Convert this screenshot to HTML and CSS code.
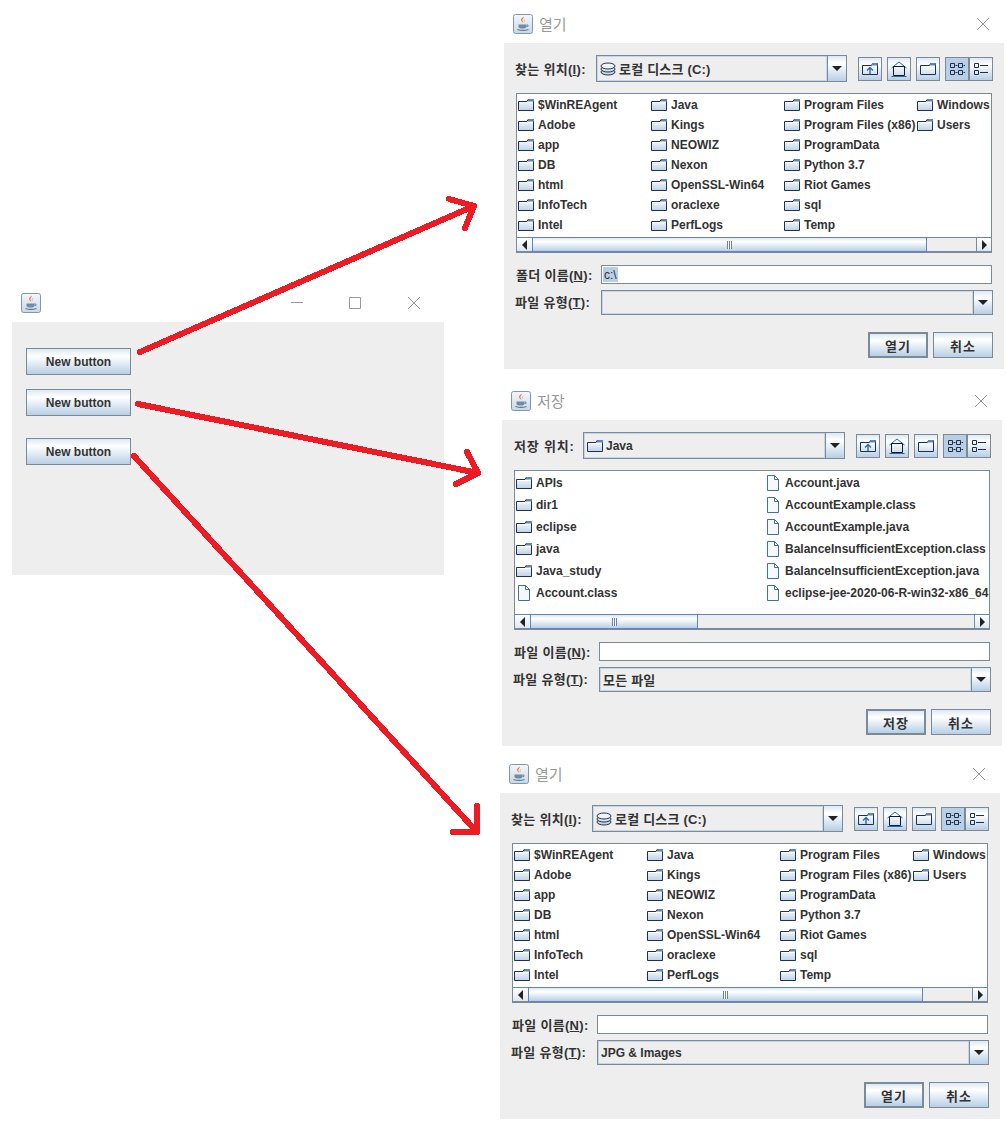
FILE: index.html
```html
<!DOCTYPE html>
<html lang="ko">
<head>
<meta charset="utf-8">
<title>JFileChooser</title>
<link rel="stylesheet" href="styles.css">
</head>
<body>
<svg class="defs" width="0" height="0" aria-hidden="true">
  <defs>
    <linearGradient id="fg" x1="0" y1="0" x2="0" y2="1"><stop offset="0" stop-color="#ffffff"/><stop offset="1" stop-color="#bcd2e7"/></linearGradient>
    <linearGradient id="jg" x1="0" y1="0" x2="0" y2="1"><stop offset="0" stop-color="#f4f7fa"/><stop offset="1" stop-color="#c9d8e6"/></linearGradient>
    <symbol id="java" viewBox="0 0 20 20">
      <rect x="0.5" y="0.5" width="19" height="19" rx="2" fill="url(#jg)" stroke="#8096ab"/>
      <path d="M10.500 2.500c1 1.500-2 2.500-1 4.500.3.600.8 1.200 1 1.800-2-1-3.200-2.700-2-4.300C9.300 3.700 10.300 3.500 10.500 2.500z" fill="#e8762b"/>
      <path d="M12.500 5c-1 .8-1.700 1.700-1 3.300-1-.8-1.300-2.500 1-3.300z" fill="#e8762b"/>
      <path d="M5.500 10.500h8v2c0 1.500-1.500 2-4 2s-4-.5-4-2z" fill="#6f8ca6"/>
      <path d="M13.500 11h1.500v1.500h-1.500" fill="none" stroke="#6f8ca6"/>
      <path d="M4.500 15.500c3 1 8 1 11 0" fill="none" stroke="#5c7a96" stroke-width="1.200"/>
    </symbol>
    <symbol id="folder" viewBox="0 0 16 14">
      <path d="M0.500 3.500h8.500l1-2h5.500v11h-15z" fill="url(#fg)" stroke="#22304a"/>
      <path d="M9.500 3.500l1-2.500h5.500v2.500z" fill="#6382bf"/>
      <path d="M1 4.500h14" stroke="#ffffff"/>
    </symbol>
    <symbol id="file" viewBox="0 0 14 16">
      <path d="M1.500 0.500h7l4 4v11h-11z" fill="#f6f9fc" stroke="#3f6fa6"/>
      <path d="M8.500 0.500v4h4" fill="none" stroke="#3f6fa6"/>
    </symbol>
    <symbol id="disk" viewBox="0 0 16 16">
      <ellipse cx="8" cy="11" rx="7" ry="3" fill="#c5d3e2" stroke="#26364d"/>
      <ellipse cx="8" cy="8" rx="7" ry="3" fill="#d8e2ed" stroke="#26364d"/>
      <ellipse cx="8" cy="5" rx="7" ry="3" fill="#eef3f8" stroke="#26364d"/>
    </symbol>
    <symbol id="up" viewBox="0 0 16 16">
      <path d="M0.500 4.500h9l1-2h5v11h-15z" fill="none" stroke="#1f2f4d"/>
      <path d="M10.500 2h5v2.500h-6z" fill="#6382bf"/>
      <path d="M8 13v-6M5 9.500l3-3 3 3" fill="none" stroke="#2b6cb0" stroke-width="1.400"/>
    </symbol>
    <symbol id="home" viewBox="0 0 16 16">
      <path d="M0.500 7l7.500-6 7.500 6" fill="none" stroke="#2c6aa8"/>
      <path d="M2.500 5.500h11v9h-11z" fill="none" stroke="#111a2c"/>
      <path d="M0.500 15.500h15" stroke="#2c6aa8"/>
    </symbol>
    <symbol id="newf" viewBox="0 0 16 16">
      <path d="M0.500 4.500h9l1-2h5v11h-15z" fill="none" stroke="#1f2f4d"/>
      <path d="M10.500 2h5v2.500h-6z" fill="#6382bf"/>
    </symbol>
    <symbol id="grid" viewBox="0 0 16 16">
      <path d="M1.500 2.500h4v4h-4zM9.500 2.500h4v4h-4zM1.500 9.500h4v4h-4zM9.500 9.500h4v4h-4z" fill="none" stroke="#1f2f4d"/>
      <path d="M6.500 4.500h2M14.500 4.500h1.500M6.500 11.500h2M14.500 11.500h1.500" stroke="#1f2f4d"/>
    </symbol>
    <symbol id="rows" viewBox="0 0 16 16">
      <path d="M1.500 2.500h4v4h-4zM1.500 9.500h4v4h-4z" fill="none" stroke="#1f2f4d"/>
      <path d="M7 4.500h8M7 11.500h8" stroke="#1f2f4d"/>
    </symbol>
    <symbol id="min" viewBox="0 0 12 12"><path d="M0 5.500h12" stroke="#999"/></symbol>
    <symbol id="max" viewBox="0 0 12 12"><path d="M0.500 0.500h11v11h-11z" fill="none" stroke="#999"/></symbol>
    <symbol id="close" viewBox="0 0 12 12"><path d="M0 0l12 12M12 0l-12 12" stroke="#999"/></symbol>
  </defs>
</svg>

<div class="canvas">

  <section class="frame frame-main">
    <header class="titlebar titlebar-main">
      <svg class="app-icon"><use href="#java"/></svg>
      <span class="win-ctl win-min"><svg class="ctl"><use href="#min"/></svg></span>
      <span class="win-ctl win-max"><svg class="ctl"><use href="#max"/></svg></span>
      <span class="win-ctl win-close"><svg class="ctl"><use href="#close"/></svg></span>
    </header>
    <div class="main-panel">
      <button class="btn btn-new">New button</button>
      <button class="btn btn-new gap-a">New button</button>
      <button class="btn btn-new gap-b">New button</button>
    </div>
  </section>

  <section class="frame frame-dlg dlg-open-a">
    <header class="titlebar">
      <svg class="app-icon"><use href="#java"/></svg>
      <h1 class="dlg-title">열기</h1>
      <svg class="ctl dlg-close"><use href="#close"/></svg>
    </header>
    <div class="dlg-body">
      <div class="top-row">
        <label class="top-label">찾는 위치(<u>I</u>):</label>
        <div class="combo combo-top">
          <div class="combo-field ko"><svg class="ico-disk"><use href="#disk"/></svg>로컬 디스크 (C:)</div>
          <div class="combo-arrow"><i class="tri-down"></i></div>
        </div>
        <div class="tools">
          <button class="tool"><svg class="tool-ico"><use href="#up"/></svg></button>
          <button class="tool"><svg class="tool-ico"><use href="#home"/></svg></button>
          <button class="tool"><svg class="tool-ico"><use href="#newf"/></svg></button>
          <div class="tool-pair">
            <button class="tool tool-on"><svg class="tool-ico"><use href="#grid"/></svg></button>
            <button class="tool"><svg class="tool-ico"><use href="#rows"/></svg></button>
          </div>
        </div>
      </div>
      <div class="list">
        <div class="list-grid four">
          <div class="cell"><svg class="ico-f"><use href="#folder"/></svg>$WinREAgent</div>
          <div class="cell"><svg class="ico-f"><use href="#folder"/></svg>Adobe</div>
          <div class="cell"><svg class="ico-f"><use href="#folder"/></svg>app</div>
          <div class="cell"><svg class="ico-f"><use href="#folder"/></svg>DB</div>
          <div class="cell"><svg class="ico-f"><use href="#folder"/></svg>html</div>
          <div class="cell"><svg class="ico-f"><use href="#folder"/></svg>InfoTech</div>
          <div class="cell"><svg class="ico-f"><use href="#folder"/></svg>Intel</div>
          <div class="cell"><svg class="ico-f"><use href="#folder"/></svg>Java</div>
          <div class="cell"><svg class="ico-f"><use href="#folder"/></svg>Kings</div>
          <div class="cell"><svg class="ico-f"><use href="#folder"/></svg>NEOWIZ</div>
          <div class="cell"><svg class="ico-f"><use href="#folder"/></svg>Nexon</div>
          <div class="cell"><svg class="ico-f"><use href="#folder"/></svg>OpenSSL-Win64</div>
          <div class="cell"><svg class="ico-f"><use href="#folder"/></svg>oraclexe</div>
          <div class="cell"><svg class="ico-f"><use href="#folder"/></svg>PerfLogs</div>
          <div class="cell"><svg class="ico-f"><use href="#folder"/></svg>Program Files</div>
          <div class="cell"><svg class="ico-f"><use href="#folder"/></svg>Program Files (x86)</div>
          <div class="cell"><svg class="ico-f"><use href="#folder"/></svg>ProgramData</div>
          <div class="cell"><svg class="ico-f"><use href="#folder"/></svg>Python 3.7</div>
          <div class="cell"><svg class="ico-f"><use href="#folder"/></svg>Riot Games</div>
          <div class="cell"><svg class="ico-f"><use href="#folder"/></svg>sql</div>
          <div class="cell"><svg class="ico-f"><use href="#folder"/></svg>Temp</div>
          <div class="cell"><svg class="ico-f"><use href="#folder"/></svg>Windows</div>
          <div class="cell"><svg class="ico-f"><use href="#folder"/></svg>Users</div>
        </div>
        <div class="scrollbar">
          <div class="sb-btn"><i class="tri-left"></i></div>
          <div class="sb-thumb thumb-wide"><i class="grip"></i></div>
          <div class="sb-track"></div>
          <div class="sb-btn"><i class="tri-right"></i></div>
        </div>
      </div>
      <div class="field-row">
        <label class="field-label">폴더 이름(<u>N</u>):</label>
        <div class="textbox"><span class="sel">c:\</span></div>
      </div>
      <div class="type-row">
        <label class="field-label">파일 유형(<u>T</u>):</label>
        <div class="combo combo-type">
          <div class="combo-field"></div>
          <div class="combo-arrow"><i class="tri-down"></i></div>
        </div>
      </div>
      <div class="actions">
        <button class="btn btn-act btn-default">열기</button>
        <button class="btn btn-act">취소</button>
      </div>
    </div>
  </section>

  <section class="frame frame-dlg dlg-save">
    <header class="titlebar">
      <svg class="app-icon"><use href="#java"/></svg>
      <h1 class="dlg-title">저장</h1>
      <svg class="ctl dlg-close"><use href="#close"/></svg>
    </header>
    <div class="dlg-body">
      <div class="top-row">
        <label class="top-label top-label-save">저장 위치:</label>
        <div class="combo combo-top">
          <div class="combo-field"><svg class="ico-f ico-tight"><use href="#folder"/></svg>Java</div>
          <div class="combo-arrow"><i class="tri-down"></i></div>
        </div>
        <div class="tools">
          <button class="tool"><svg class="tool-ico"><use href="#up"/></svg></button>
          <button class="tool"><svg class="tool-ico"><use href="#home"/></svg></button>
          <button class="tool"><svg class="tool-ico"><use href="#newf"/></svg></button>
          <div class="tool-pair">
            <button class="tool tool-on"><svg class="tool-ico"><use href="#grid"/></svg></button>
            <button class="tool"><svg class="tool-ico"><use href="#rows"/></svg></button>
          </div>
        </div>
      </div>
      <div class="list">
        <div class="list-grid two">
          <div class="cell"><svg class="ico-f"><use href="#folder"/></svg>APIs</div>
          <div class="cell"><svg class="ico-f"><use href="#folder"/></svg>dir1</div>
          <div class="cell"><svg class="ico-f"><use href="#folder"/></svg>eclipse</div>
          <div class="cell"><svg class="ico-f"><use href="#folder"/></svg>java</div>
          <div class="cell"><svg class="ico-f"><use href="#folder"/></svg>Java_study</div>
          <div class="cell"><svg class="ico-file"><use href="#file"/></svg>Account.class</div>
          <div class="cell"><svg class="ico-file"><use href="#file"/></svg>Account.java</div>
          <div class="cell"><svg class="ico-file"><use href="#file"/></svg>AccountExample.class</div>
          <div class="cell"><svg class="ico-file"><use href="#file"/></svg>AccountExample.java</div>
          <div class="cell"><svg class="ico-file"><use href="#file"/></svg>BalanceInsufficientException.class</div>
          <div class="cell"><svg class="ico-file"><use href="#file"/></svg>BalanceInsufficientException.java</div>
          <div class="cell"><svg class="ico-file"><use href="#file"/></svg>eclipse-jee-2020-06-R-win32-x86_64</div>
        </div>
        <div class="scrollbar">
          <div class="sb-btn"><i class="tri-left"></i></div>
          <div class="sb-thumb thumb-narrow"><i class="grip"></i></div>
          <div class="sb-track"></div>
          <div class="sb-btn"><i class="tri-right"></i></div>
        </div>
      </div>
      <div class="field-row">
        <label class="field-label">파일 이름(<u>N</u>):</label>
        <div class="textbox"></div>
      </div>
      <div class="type-row">
        <label class="field-label">파일 유형(<u>T</u>):</label>
        <div class="combo combo-type">
          <div class="combo-field ko">모든 파일</div>
          <div class="combo-arrow"><i class="tri-down"></i></div>
        </div>
      </div>
      <div class="actions">
        <button class="btn btn-act btn-default">저장</button>
        <button class="btn btn-act">취소</button>
      </div>
    </div>
  </section>

  <section class="frame frame-dlg dlg-open-b">
    <header class="titlebar">
      <svg class="app-icon"><use href="#java"/></svg>
      <h1 class="dlg-title">열기</h1>
      <svg class="ctl dlg-close"><use href="#close"/></svg>
    </header>
    <div class="dlg-body">
      <div class="top-row">
        <label class="top-label">찾는 위치(<u>I</u>):</label>
        <div class="combo combo-top">
          <div class="combo-field ko"><svg class="ico-disk"><use href="#disk"/></svg>로컬 디스크 (C:)</div>
          <div class="combo-arrow"><i class="tri-down"></i></div>
        </div>
        <div class="tools">
          <button class="tool"><svg class="tool-ico"><use href="#up"/></svg></button>
          <button class="tool"><svg class="tool-ico"><use href="#home"/></svg></button>
          <button class="tool"><svg class="tool-ico"><use href="#newf"/></svg></button>
          <div class="tool-pair">
            <button class="tool tool-on"><svg class="tool-ico"><use href="#grid"/></svg></button>
            <button class="tool"><svg class="tool-ico"><use href="#rows"/></svg></button>
          </div>
        </div>
      </div>
      <div class="list">
        <div class="list-grid four">
          <div class="cell"><svg class="ico-f"><use href="#folder"/></svg>$WinREAgent</div>
          <div class="cell"><svg class="ico-f"><use href="#folder"/></svg>Adobe</div>
          <div class="cell"><svg class="ico-f"><use href="#folder"/></svg>app</div>
          <div class="cell"><svg class="ico-f"><use href="#folder"/></svg>DB</div>
          <div class="cell"><svg class="ico-f"><use href="#folder"/></svg>html</div>
          <div class="cell"><svg class="ico-f"><use href="#folder"/></svg>InfoTech</div>
          <div class="cell"><svg class="ico-f"><use href="#folder"/></svg>Intel</div>
          <div class="cell"><svg class="ico-f"><use href="#folder"/></svg>Java</div>
          <div class="cell"><svg class="ico-f"><use href="#folder"/></svg>Kings</div>
          <div class="cell"><svg class="ico-f"><use href="#folder"/></svg>NEOWIZ</div>
          <div class="cell"><svg class="ico-f"><use href="#folder"/></svg>Nexon</div>
          <div class="cell"><svg class="ico-f"><use href="#folder"/></svg>OpenSSL-Win64</div>
          <div class="cell"><svg class="ico-f"><use href="#folder"/></svg>oraclexe</div>
          <div class="cell"><svg class="ico-f"><use href="#folder"/></svg>PerfLogs</div>
          <div class="cell"><svg class="ico-f"><use href="#folder"/></svg>Program Files</div>
          <div class="cell"><svg class="ico-f"><use href="#folder"/></svg>Program Files (x86)</div>
          <div class="cell"><svg class="ico-f"><use href="#folder"/></svg>ProgramData</div>
          <div class="cell"><svg class="ico-f"><use href="#folder"/></svg>Python 3.7</div>
          <div class="cell"><svg class="ico-f"><use href="#folder"/></svg>Riot Games</div>
          <div class="cell"><svg class="ico-f"><use href="#folder"/></svg>sql</div>
          <div class="cell"><svg class="ico-f"><use href="#folder"/></svg>Temp</div>
          <div class="cell"><svg class="ico-f"><use href="#folder"/></svg>Windows</div>
          <div class="cell"><svg class="ico-f"><use href="#folder"/></svg>Users</div>
        </div>
        <div class="scrollbar">
          <div class="sb-btn"><i class="tri-left"></i></div>
          <div class="sb-thumb thumb-wide"><i class="grip"></i></div>
          <div class="sb-track"></div>
          <div class="sb-btn"><i class="tri-right"></i></div>
        </div>
      </div>
      <div class="field-row">
        <label class="field-label">파일 이름(<u>N</u>):</label>
        <div class="textbox"></div>
      </div>
      <div class="type-row">
        <label class="field-label">파일 유형(<u>T</u>):</label>
        <div class="combo combo-type">
          <div class="combo-field">JPG &amp; Images</div>
          <div class="combo-arrow"><i class="tri-down"></i></div>
        </div>
      </div>
      <div class="actions">
        <button class="btn btn-act btn-default">열기</button>
        <button class="btn btn-act">취소</button>
      </div>
    </div>
  </section>

  <svg class="arrows" viewBox="0 0 1007 1130" aria-hidden="true">
    <path d="M140 352L474 206M449 199L474 206L465 228"/>
    <path d="M138 404L478 473M467 452L478 473L456 484"/>
    <path d="M134 456L477 832M477 806L477 832L453 832"/>
  </svg>
</div>
</body>
</html>
```

FILE: styles.css
```css
* { box-sizing: border-box; }

html, body {
  margin: 0;
  padding: 0;
  background: #ffffff;
}

body {
  font-family: "Liberation Sans", "Noto Sans CJK KR", sans-serif;
  font-size: 12px;
  font-weight: 700;
  color: #333333;
}

.defs { position: absolute; }

.canvas {
  position: relative;
  width: 1007px;
  height: 1130px;
  overflow: hidden;
}

/* free-canvas windows */
.frame { position: absolute; }
.frame-main { left: 12px; top: 289px; width: 432px; }
.frame-dlg { width: 500px; }
.dlg-open-a { left: 504px; top: 10px; }
.dlg-save { left: 502px; top: 387px; }
.dlg-open-b { left: 500px; top: 760px; }

.arrows {
  position: absolute;
  left: 0;
  top: 0;
  width: 1007px;
  height: 1130px;
  pointer-events: none;
}
.arrows path {
  fill: none;
  stroke: #ed1c24;
  stroke-width: 6;
  stroke-linecap: round;
  stroke-linejoin: round;
  shape-rendering: crispEdges;
}

/* title bars */
.titlebar {
  display: flex;
  align-items: center;
  height: 33px;
  padding: 0 0 6px 9px;
  background: #ffffff;
}
.app-icon { width: 20px; height: 20px; flex: none; }
.dlg-title {
  margin: 0 0 0 6px;
  font-family: "Noto Sans CJK KR", sans-serif;
  font-size: 15px;
  font-weight: 400;
  color: #999999;
  flex: 1;
}
.ctl { width: 12px; height: 12px; display: block; }
.dlg-close { margin-right: 15px; }

.win-ctl { display: block; }
.win-min { margin-left: 250px; }
.win-max { margin-left: 46px; }
.win-close { margin-left: 47px; }

/* main panel */
.main-panel {
  display: flex;
  flex-direction: column;
  align-items: flex-start;
  height: 253px;
  padding: 26px 14px;
  background: #eeeeee;
}

/* buttons */
.btn {
  display: block;
  padding: 0;
  border: 1px solid #7a8a99;
  background: linear-gradient(to bottom, #dde8f3 0%, #ffffff 28%, #f4f8fb 40%, #b8cfe5 100%);
  font: inherit;
  color: #333333;
  text-align: center;
}
.btn-new { width: 105px; height: 27px; }
.gap-a { margin-top: 14px; }
.gap-b { margin-top: 22px; }

/* dialog body */
.dlg-body {
  height: 326px;
  padding: 12px 11px 0 12px;
  background: #eeeeee;
}

.top-row { display: flex; align-items: center; height: 27px; }
.top-label, .field-label {
  flex: none;
  font-size: 13px;
  letter-spacing: 0.3px;
  white-space: nowrap;
}
.top-label { width: 81px; margin-left: -1px; }
.top-label-save { width: 70px; margin-left: 0; letter-spacing: 0.8px; flex-basis: 69px; }

u { text-decoration: underline; }

/* combos */
.combo {
  display: flex;
  border: 1px solid #7a8a99;
  background: #eeeeee;
}
.combo-top { flex: 1; height: 27px; }
.combo-type { flex: 1; height: 25px; }
.combo-field {
  flex: 1;
  display: flex;
  align-items: center;
  padding-left: 2px;
  border: 1px solid #c6d6e6;
  white-space: nowrap;
}
.ko { font-size: 13px; letter-spacing: 0.2px; }
.combo-arrow {
  flex: none;
  width: 19px;
  display: flex;
  align-items: center;
  justify-content: center;
  border-left: 1px solid #7a8a99;
  background: linear-gradient(to bottom, #dde8f3 0%, #ffffff 28%, #f4f8fb 40%, #b8cfe5 100%);
}
.tri-down {
  width: 0;
  height: 0;
  border-left: 5px solid transparent;
  border-right: 5px solid transparent;
  border-top: 5px solid #222222;
}
.ico-disk { width: 16px; height: 16px; margin-right: 3px; flex: none; }

/* toolbar */
.tools { display: flex; gap: 5px; margin-left: 11px; flex: none; }
.tool-pair { display: flex; }
.tool {
  width: 24px;
  height: 24px;
  padding: 3px;
  border: 1px solid #7a8a99;
  background: linear-gradient(to bottom, #dde8f3 0%, #ffffff 28%, #f4f8fb 40%, #b8cfe5 100%);
}
.tool-on { background: #b8cfe5; }
.tool-ico { width: 16px; height: 16px; display: block; }

/* list */
.list {
  width: 476px;
  height: 160px;
  margin-top: 11px;
  display: flex;
  flex-direction: column;
  border: 1px solid #7a8a99;
  background: #ffffff;
}
.list-grid {
  flex: 1;
  display: grid;
  grid-auto-flow: column;
  overflow: hidden;
  min-height: 0;
}
.four {
  grid-template-rows: repeat(7, 20px);
  grid-auto-columns: 133px;
}
.two {
  grid-template-rows: repeat(6, 22px);
  grid-auto-columns: 249px;
}
.cell {
  display: flex;
  align-items: center;
  padding: 2px 0 0 1px;
  white-space: nowrap;
  color: #333333;
}
.ico-f { width: 16px; height: 14px; margin-right: 4px; flex: none; }
.ico-tight { margin-right: 3px; }
.ico-file { width: 14px; height: 16px; margin-right: 5px; flex: none; margin-left: 1px; }

/* scrollbar */
.scrollbar {
  flex: none;
  display: flex;
  height: 15px;
  border-top: 1px solid #6382bf;
  background: #eeeeee;
}
.sb-btn {
  flex: none;
  width: 15px;
  display: flex;
  align-items: center;
  justify-content: center;
  background: linear-gradient(to bottom, #ffffff, #dde8f3);
  border-bottom: 1px solid #7a8a99;
}
.sb-btn:last-child { border-left: 1px solid #7a8a99; }
.tri-left, .tri-right {
  width: 0;
  height: 0;
  border-top: 5px solid transparent;
  border-bottom: 5px solid transparent;
}
.tri-left { border-right: 5px solid #222222; }
.tri-right { border-left: 5px solid #222222; }
.sb-thumb {
  flex: none;
  display: flex;
  align-items: center;
  justify-content: center;
  border: 1px solid #6382bf;
  border-top: 0;
  background: linear-gradient(to bottom, #dde8f3 0%, #ffffff 28%, #f4f8fb 40%, #b8cfe5 100%);
}
.thumb-wide { width: 395px; }
.thumb-narrow { width: 168px; }
.grip {
  width: 5px;
  height: 8px;
  background: repeating-linear-gradient(to right, #6382bf 0 1px, #ffffff 1px 2px);
}
.sb-track { flex: 1; border-bottom: 1px solid #7a8a99; }

/* form rows */
.field-row {
  display: flex;
  align-items: center;
  margin-top: 12px;
  height: 19px;
  width: 476px;
}
.type-row {
  display: flex;
  align-items: center;
  margin-top: 6px;
  height: 25px;
  width: 477px;
}
.field-label { width: 85px; }
.type-row .field-label { padding-bottom: 2px; margin-left: -1px; width: 86px; }
.textbox {
  flex: 1;
  height: 19px;
  padding: 1px 0 0 1px;
  border: 1px solid #7a8a99;
  background: #ffffff;
  font-weight: 400;
  line-height: 15px;
}
.sel { display: inline-block; height: 15px; padding: 1px 1px 0; line-height: 14px; background: #b8cfe5; }

/* actions */
.actions {
  display: flex;
  justify-content: flex-end;
  gap: 5px;
  margin-top: 17px;
  width: 477px;
}
.btn-act { width: 60px; height: 26px; font-size: 13px; letter-spacing: 1px; }
.btn-default { border-width: 2px; }
```
